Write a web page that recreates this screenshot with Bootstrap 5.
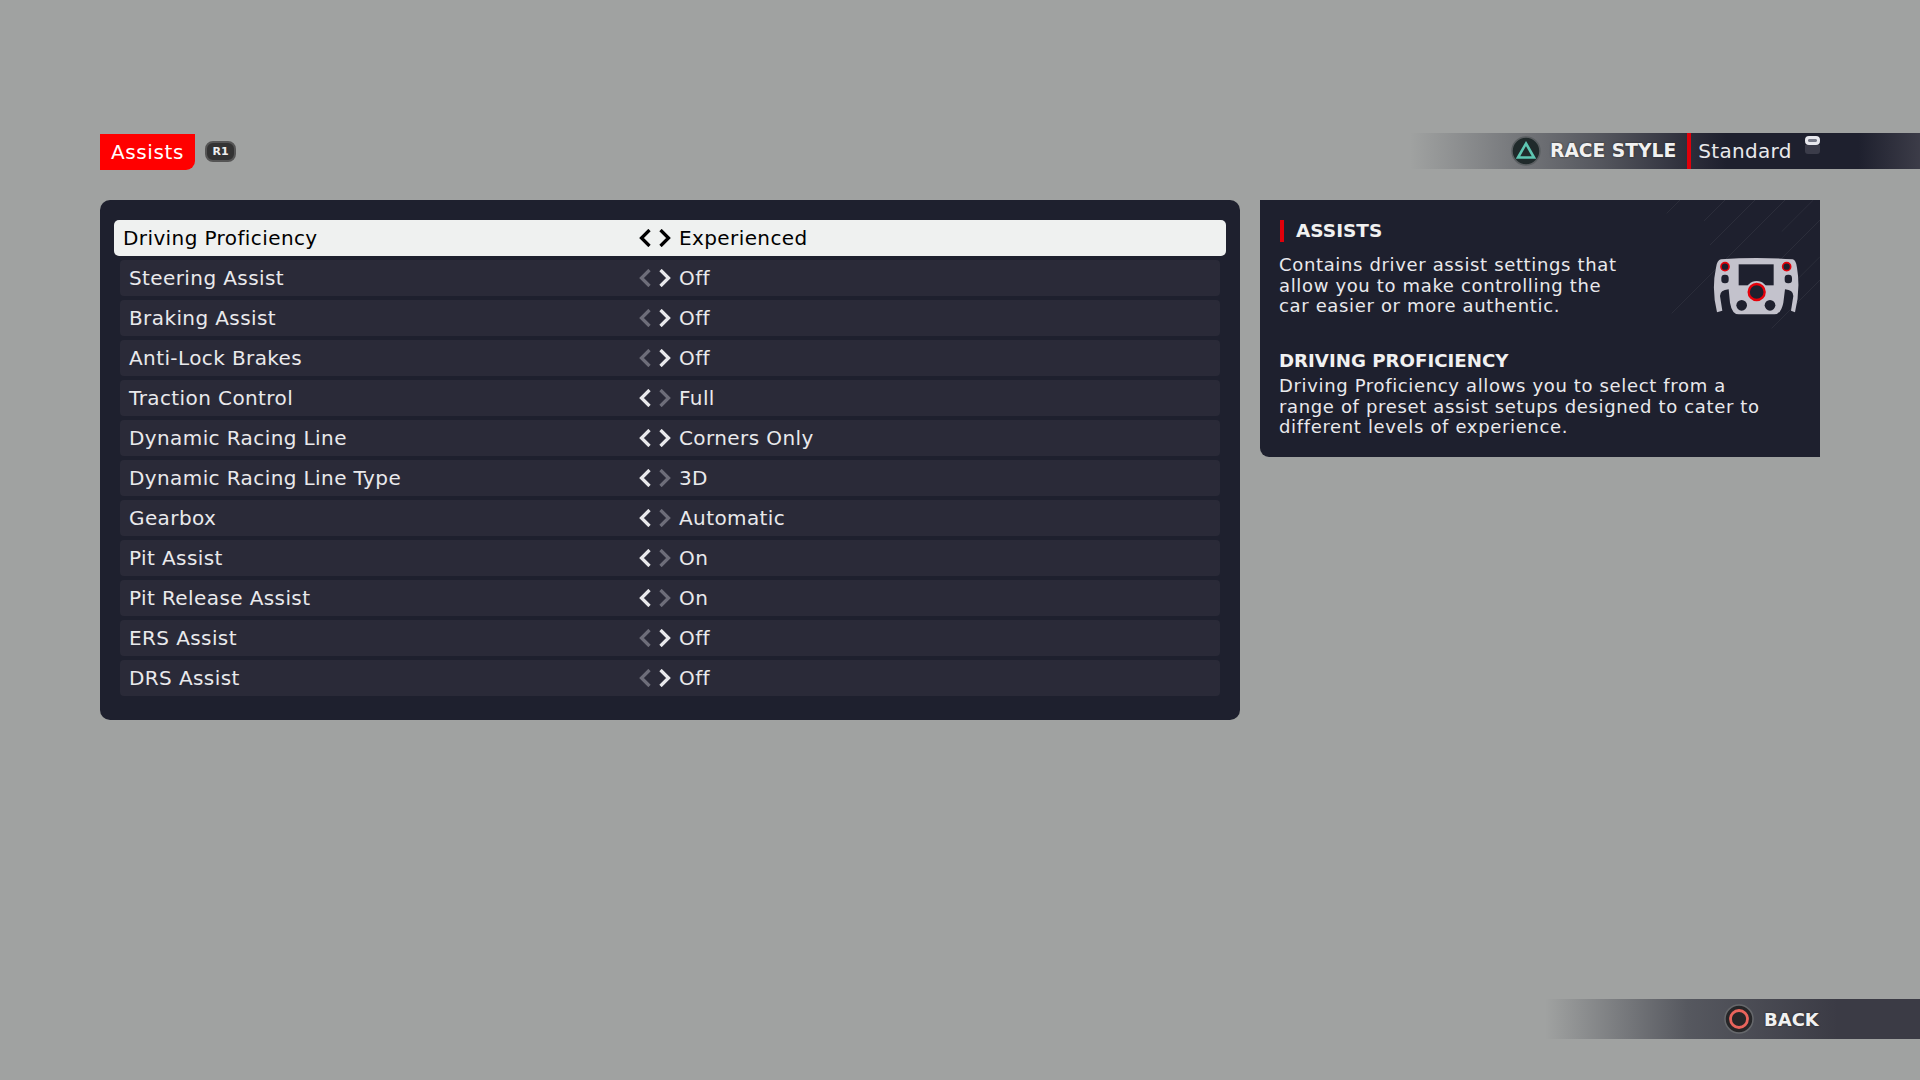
<!DOCTYPE html>
<html lang="en">
<head>
<meta charset="utf-8">
<title>Assists</title>
<link href="https://cdn.jsdelivr.net/npm/bootstrap@5.3.0/dist/css/bootstrap.min.css" rel="stylesheet">
<style>
body{background:#a0a2a1;font-family:"DejaVu Sans","Liberation Sans",sans-serif;color:#e9e9ec;font-size:20px;letter-spacing:.4px;overflow:hidden}
.screen{height:1080px;padding-top:133px}
.head-row{height:37px;padding-left:100px}
.tab-red{background:#f00;color:#fff;width:95px;height:36px;margin-top:1px;border-bottom-right-radius:9px;font-size:20px;letter-spacing:.6px;line-height:36px;text-align:center}
.r1-key{width:31px;height:21px;margin:8px 0 0 10px;background:#333;border:2px solid #555;border-radius:8px;color:#eee;font-size:11px;font-weight:700;letter-spacing:0;line-height:17px;text-align:center}
.style-bar{width:510px;height:36px;background:linear-gradient(90deg,rgba(30,32,46,0) 0,rgba(60,62,72,.75) 37%,#2a2b38 56%,#1e202e 62%,#1e202e 88%,#3c3c48 100%)}
.bar-icon{margin-left:101px;flex:none;display:block}
.bar-title{font-weight:700;font-size:18.7px;letter-spacing:0;margin-left:9px;color:#f1f1f1;text-shadow:0 0 2px #222;white-space:nowrap}
.bar-red{width:4px;height:36px;background:#e0000a;margin-left:11px}
.bar-value{margin-left:7px;width:107px;white-space:nowrap;letter-spacing:.3px}
.toggle-key{width:15px;margin-top:3px}
.toggle-top{height:9px;background:#e8e8ee;border:3px solid #e8e8ee;border-radius:4px;box-shadow:inset 0 0 0 9px #777a88}
.toggle-bot{height:9px;background:#3b3c4a;border-radius:0 0 3px 3px}
.main-row{margin:30px 0 0 100px}
.list-panel{width:1140px;height:520px;background:#1e202e;border-radius:10px;padding:20px 14px 0 14px}
.opt-row{height:36px;margin:0 6px 4px;background:#2a2a38;border-radius:4px;padding-left:9px;line-height:36px;white-space:nowrap}
.opt-row.is-on{margin:0 0 4px;background:#eff1f0;color:#000;padding-left:9px;border-radius:5px}
.opt-name{width:510px;flex:none}
.is-on .opt-name{width:516px}
.opt-arrows{width:40px;flex:none;gap:8px}
.opt-arrows svg{display:block;flex:none}
.info-panel{width:560px;height:257px;margin-left:20px;background:#1e202e;border-bottom-left-radius:9px;padding:20px 19px 0 19px;line-height:20.5px;font-size:18px;letter-spacing:.65px}
.info-stripes{top:0;right:0}
.info-title{font-weight:700;font-size:18.2px;letter-spacing:0;color:#f1f1f1;white-space:nowrap}
.info-main{border-left:4px solid #e0000a;height:22px;line-height:22px;padding-left:12px;margin-left:1px;font-size:18.5px}
.info-top{height:64px;margin-top:13px;white-space:nowrap}
.wheel-pic{top:56px;right:19px}
.info-sub{margin-top:31px;line-height:22px}
.info-text{white-space:nowrap;height:62px;margin-top:4px}
.foot-bar{width:375px;height:40px;margin-top:auto;margin-bottom:41px;margin-left:auto;background:linear-gradient(90deg,rgba(78,80,88,0) 0,rgba(78,80,88,.9) 38%,#3b3b45 78%,#3b3b45 100%)}
.foot-icon{margin-left:179px;display:block;flex:none}
.foot-title{margin-left:10px;font-weight:700;font-size:18px;letter-spacing:0;color:#f1f1f1;text-shadow:0 0 2px #222}
</style>
</head>
<body>
<svg width="0" height="0" class="d-block position-absolute">
  <defs>
    <symbol id="chev-l" viewBox="0 0 12 18"><path d="M10.5 1 2.5 9l8 8" fill="none" stroke="currentColor" stroke-width="3.3"/></symbol>
    <symbol id="chev-r" viewBox="0 0 12 18"><path d="M1.5 1 9.5 9l-8 8" fill="none" stroke="currentColor" stroke-width="3.3"/></symbol>
  </defs>
</svg>
<div class="screen d-flex flex-column">
  <div class="head-row d-flex justify-content-between">
    <div class="d-flex">
      <div class="tab-red">Assists</div>
      <div class="r1-key">R1</div>
    </div>
    <div class="style-bar d-flex align-items-center">
      <svg class="bar-icon" width="30" height="30" viewBox="0 0 30 30"><circle cx="15" cy="15" r="14" fill="#202a2b" stroke="#5b5f62" stroke-width="1.5"/><path d="M15 7.5 23 21.5H7Z" fill="none" stroke="#5ec6b2" stroke-width="2.6"/></svg>
      <div class="bar-title">RACE STYLE</div>
      <div class="bar-red"></div>
      <div class="bar-value">Standard</div>
      <div class="toggle-key align-self-start"><div class="toggle-top"></div><div class="toggle-bot"></div></div>
    </div>
  </div>
  <div class="main-row d-flex align-items-start">
    <div class="list-panel">
      <div class="opt-row is-on d-flex"><div class="opt-name">Driving Proficiency</div><div class="opt-arrows d-flex align-items-center"><svg width="12" height="18" style="color:#000"><use href="#chev-l"/></svg><svg width="12" height="18" style="color:#000"><use href="#chev-r"/></svg></div><div>Experienced</div></div>
      <div class="opt-row d-flex"><div class="opt-name">Steering Assist</div><div class="opt-arrows d-flex align-items-center"><svg width="12" height="18" style="color:#6e6e7a"><use href="#chev-l"/></svg><svg width="12" height="18" style="color:#e9e9ec"><use href="#chev-r"/></svg></div><div>Off</div></div>
      <div class="opt-row d-flex"><div class="opt-name">Braking Assist</div><div class="opt-arrows d-flex align-items-center"><svg width="12" height="18" style="color:#6e6e7a"><use href="#chev-l"/></svg><svg width="12" height="18" style="color:#e9e9ec"><use href="#chev-r"/></svg></div><div>Off</div></div>
      <div class="opt-row d-flex"><div class="opt-name">Anti-Lock Brakes</div><div class="opt-arrows d-flex align-items-center"><svg width="12" height="18" style="color:#6e6e7a"><use href="#chev-l"/></svg><svg width="12" height="18" style="color:#e9e9ec"><use href="#chev-r"/></svg></div><div>Off</div></div>
      <div class="opt-row d-flex"><div class="opt-name">Traction Control</div><div class="opt-arrows d-flex align-items-center"><svg width="12" height="18" style="color:#e9e9ec"><use href="#chev-l"/></svg><svg width="12" height="18" style="color:#6e6e7a"><use href="#chev-r"/></svg></div><div>Full</div></div>
      <div class="opt-row d-flex"><div class="opt-name">Dynamic Racing Line</div><div class="opt-arrows d-flex align-items-center"><svg width="12" height="18" style="color:#e9e9ec"><use href="#chev-l"/></svg><svg width="12" height="18" style="color:#e9e9ec"><use href="#chev-r"/></svg></div><div>Corners Only</div></div>
      <div class="opt-row d-flex"><div class="opt-name">Dynamic Racing Line Type</div><div class="opt-arrows d-flex align-items-center"><svg width="12" height="18" style="color:#e9e9ec"><use href="#chev-l"/></svg><svg width="12" height="18" style="color:#6e6e7a"><use href="#chev-r"/></svg></div><div>3D</div></div>
      <div class="opt-row d-flex"><div class="opt-name">Gearbox</div><div class="opt-arrows d-flex align-items-center"><svg width="12" height="18" style="color:#e9e9ec"><use href="#chev-l"/></svg><svg width="12" height="18" style="color:#6e6e7a"><use href="#chev-r"/></svg></div><div>Automatic</div></div>
      <div class="opt-row d-flex"><div class="opt-name">Pit Assist</div><div class="opt-arrows d-flex align-items-center"><svg width="12" height="18" style="color:#e9e9ec"><use href="#chev-l"/></svg><svg width="12" height="18" style="color:#6e6e7a"><use href="#chev-r"/></svg></div><div>On</div></div>
      <div class="opt-row d-flex"><div class="opt-name">Pit Release Assist</div><div class="opt-arrows d-flex align-items-center"><svg width="12" height="18" style="color:#e9e9ec"><use href="#chev-l"/></svg><svg width="12" height="18" style="color:#6e6e7a"><use href="#chev-r"/></svg></div><div>On</div></div>
      <div class="opt-row d-flex"><div class="opt-name">ERS Assist</div><div class="opt-arrows d-flex align-items-center"><svg width="12" height="18" style="color:#6e6e7a"><use href="#chev-l"/></svg><svg width="12" height="18" style="color:#e9e9ec"><use href="#chev-r"/></svg></div><div>Off</div></div>
      <div class="opt-row d-flex"><div class="opt-name">DRS Assist</div><div class="opt-arrows d-flex align-items-center"><svg width="12" height="18" style="color:#6e6e7a"><use href="#chev-l"/></svg><svg width="12" height="18" style="color:#e9e9ec"><use href="#chev-r"/></svg></div><div>Off</div></div>
    </div>
    <div class="info-panel position-relative">
      <svg class="info-stripes position-absolute" width="160" height="140" viewBox="780 240 480 420" fill="none" stroke="#2b2d3a" stroke-width="3">
        <path d="M800 280 840 240M912 303 975 240M930 375 1065 240M815 580 1155 240M1145 335 1240 240M1115 625 1260 480M1190 480 1260 410M1130 430 1260 300"/>
      </svg>
      <svg class="wheel-pic position-absolute" width="90" height="60" viewBox="95 50 270 180">
        <path d="M125 60Q232 52 340 60 350 62 353 85 364 150 347 219L335 214 342 170Q342 152 317 150L312 190Q305 225 285 225H178Q158 225 152 190L148 150Q122 152 122 170L129 214 113 219Q96 150 110 85 113 62 125 60Z" fill="#c3c2cc"/>
        <rect x="178" y="75" width="105" height="63" fill="#1e202e"/>
        <rect x="126" y="106" width="22" height="26" rx="10" fill="#1e202e"/>
        <rect x="316" y="106" width="22" height="26" rx="10" fill="#1e202e"/>
        <circle cx="232" cy="158" r="33" fill="#c3c2cc"/>
        <circle cx="232" cy="158" r="24" fill="#1e202e" stroke="#e6000a" stroke-width="7"/>
        <circle cx="137" cy="82" r="12" fill="#1e202e" stroke="#e6000a" stroke-width="5"/>
        <circle cx="322" cy="82" r="12" fill="#1e202e" stroke="#e6000a" stroke-width="5"/>
        <circle cx="187" cy="198" r="16" fill="#1e202e"/>
        <circle cx="272" cy="198" r="16" fill="#1e202e"/>
      </svg>
      <div class="info-title info-main">ASSISTS</div>
      <div class="info-top">Contains driver assist settings that<br>allow you to make controlling the<br>car easier or more authentic.</div>
      <div class="info-title info-sub">DRIVING PROFICIENCY</div>
      <div class="info-text">Driving Proficiency allows you to select from a<br>range of preset assist setups designed to cater to<br>different levels of experience.</div>
    </div>
  </div>
  <div class="foot-bar d-flex align-items-center">
    <svg class="foot-icon" width="30" height="30" viewBox="0 0 30 30"><circle cx="15" cy="15" r="14" fill="#262628" stroke="#66686c" stroke-width="1.5"/><circle cx="15" cy="15" r="8.5" fill="none" stroke="#e8645c" stroke-width="2.8"/></svg>
    <div class="foot-title">BACK</div>
  </div>
</div>
</body>
</html>
